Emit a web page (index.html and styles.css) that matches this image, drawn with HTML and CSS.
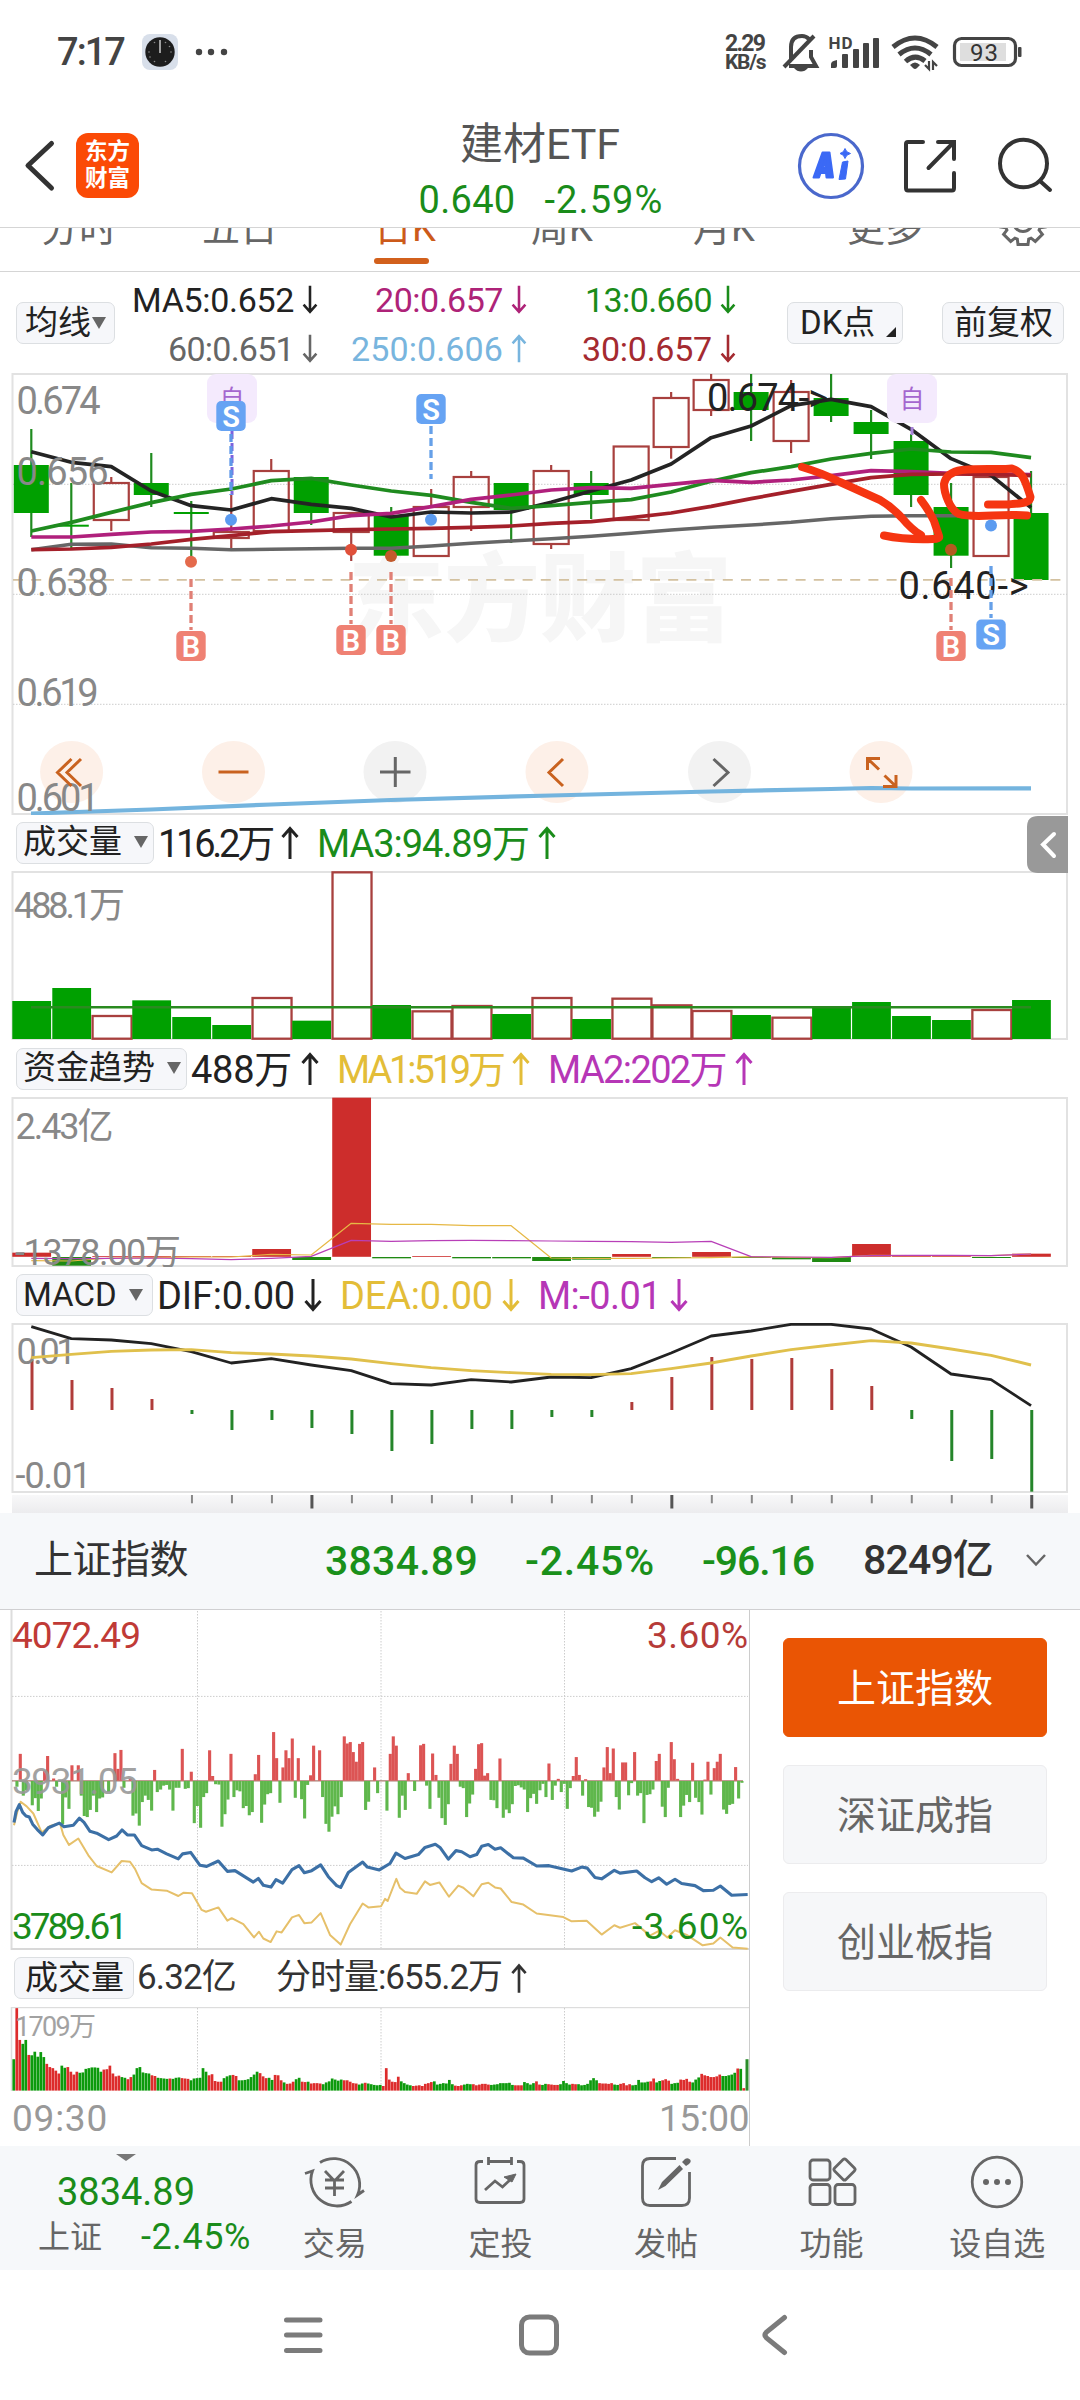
FILE: index.html
```html
<!DOCTYPE html>
<html lang="zh-CN">
<head>
<meta charset="utf-8">
<title>建材ETF</title>
<link rel="stylesheet" href="styles.css">
</head>
<body>
<svg width="0" height="0" class="defs">
  <symbol id="up" viewBox="0 0 18 34"><path d="M9 33V3M1.500 11L9 2.500L16.500 11" fill="none" stroke="currentColor" stroke-width="3"/></symbol>
  <symbol id="down" viewBox="0 0 18 34"><path d="M9 1V31M1.500 23L9 31.500L16.500 23" fill="none" stroke="currentColor" stroke-width="3"/></symbol>
</svg>
<div class="phone">
  <div class="status">
    <span class="clock-text" data-w="67">7:17</span>
    <svg class="st-left" width="90" height="40" viewBox="140 32 90 40">
      <rect x="142" y="34" width="36" height="36" rx="8" fill="#d8dfea"/>
      <circle cx="160" cy="52" r="14.700" fill="#1d1d1d"/>
      <path d="M160 40V53" stroke="#ccc" stroke-width="1.500"/>
      <g fill="#888"><circle cx="165.500" cy="42.500" r=".8"/><circle cx="169.500" cy="46.500" r=".8"/><circle cx="171" cy="52" r=".8"/><circle cx="165.500" cy="61.500" r=".8"/><circle cx="154.500" cy="61.500" r=".8"/><circle cx="150" cy="57" r=".8"/><circle cx="149" cy="52" r=".8"/><circle cx="154.500" cy="42.500" r=".8"/></g>
      <g fill="#444"><circle cx="199" cy="52" r="3.200"/><circle cx="211" cy="52" r="3.200"/><circle cx="224" cy="52" r="3.200"/></g>
    </svg>
    <div class="speed"><span data-w="47">2.29</span><span data-w="49">KB/s</span></div>
    <svg class="st-right" width="250" height="44" viewBox="780 30 250 44">
      <g fill="none" stroke="#444" stroke-width="4">
        <path d="M790 66H817L812 57V50M792 59V47Q792 36 803 36Q807 36 810 39"/>
        <path d="M785 67L815 36"/>
      </g>
      <path d="M795 68H809Q806 71.500 802 71.500Q798 71.500 795 68Z" fill="#444"/>
      <text x="829.500" y="48.500" font-size="17" font-weight="700" textLength="24" fill="#444">HD</text>
      <g fill="#444">
        <path d="M832 68V64Q832 61 838 60V66Q838 68 836 68Z"/><rect x="843" y="54" width="6" height="14" rx="1"/><rect x="854" y="49" width="6" height="19" rx="1"/><rect x="864" y="43" width="6" height="25" rx="1"/><rect x="874" y="38" width="6" height="30" rx="1"/>
      </g>
      <g fill="none" stroke="#444" stroke-width="5">
        <path d="M894 47Q916 29 938 47"/><path d="M900 54.500Q916 41.500 932 54.500"/><path d="M906.500 61.500Q916 53 926 61"/>
      </g>
      <path d="M911 65Q916 60 921 65L918 68Q916 70 914 68Z" fill="#444"/>
      <path d="M930 61V69L926 65M934 70V62L938 66" fill="none" stroke="#444" stroke-width="2.200"/>
      <rect x="955.500" y="38.500" width="61" height="27" rx="7" fill="none" stroke="#444" stroke-width="3.200"/>
      <rect x="961" y="43" width="46" height="18" fill="#dedede"/>
      <rect x="1019" y="47" width="3.500" height="10" rx="1" fill="#444"/>
      <text x="971" y="61" font-size="24" textLength="28" fill="#333">93</text>
    </svg>
  </div>

  <header class="header">
    <div class="head-left">
      <svg width="32" height="54" viewBox="24 139 32 54"><path d="M51.500 143.500L28 165.500L51.500 188" fill="none" stroke="#333" stroke-width="5" stroke-linecap="round" stroke-linejoin="round"/></svg>
      <div class="logo"><span>东方</span><span>财富</span></div>
    </div>
    <div class="head-mid">
      <div class="name" data-w="160">建材ETF</div>
      <div class="quote"><span data-w="97">0.640</span><span data-w="119">-2.59%</span></div>
    </div>
    <svg class="head-icons" width="260" height="72" viewBox="795 130 260 72">
      <circle cx="831" cy="166" r="31.500" fill="none" stroke="#4a68cc" stroke-width="3.200"/>
      <path d="M813.500 177.500L822.500 152.500H829.500L833 177.500H826.500L826 173H820.500L819 177.500ZM822.500 167.500H825.500L825 160Z" fill="#3b69f5" stroke="#3b69f5" stroke-width="2" stroke-linejoin="round"/>
      <path d="M842.500 162L848 161L845.500 179L839 179.500ZM845 148.500Q846 152.500 850.500 153.500Q846 154.500 845 158.500Q844 154.500 840 153.500Q844 152.500 845 148.500Z" fill="#3b69f5" stroke="#3b69f5" stroke-linejoin="round"/>
      <g fill="none" stroke="#333" stroke-width="4" stroke-linecap="round">
        <path d="M923 142H908Q906 142 906 144V188Q906 190.500 908 190.500H952Q954 190.500 954 188V173M938 142H954V159M953 143L928.500 168"/>
        <ellipse cx="1023.500" cy="163.500" rx="23.500" ry="23.800"/><path d="M1040 181L1050 190"/>
      </g>
    </svg>
  </header>

  <nav class="tabs">
    <span class="t1">分时</span><span class="t2">五日</span><span class="t3 on">日K</span><span class="t4">周K</span><span class="t5">月K</span><span class="t6">更多</span>
    <svg class="gear" width="54" height="54" viewBox="-27 -27 54 54"><path id="gearpath" fill="none" stroke="#666" stroke-width="3"/><circle r="9.500" fill="none" stroke="#666" stroke-width="3"/></svg>
  </nav>

  <section class="ma">
    <button class="chip">均线<i class="tri"></i></button>
    <div class="ma-grid">
      <span class="k"><b data-w="162">MA5:0.652</b><svg><use href="#down"/></svg></span>
      <span class="m"><b data-w="128">20:0.657</b><svg><use href="#down"/></svg></span>
      <span class="g"><b data-w="127">13:0.660</b><svg><use href="#down"/></svg></span>
      <span class="y"><b data-w="126">60:0.651</b><svg><use href="#down"/></svg></span>
      <span class="b"><b data-w="152">250:0.606</b><svg><use href="#up"/></svg></span>
      <span class="r"><b data-w="130">30:0.657</b><svg><use href="#down"/></svg></span>
    </div>
    <button class="chip dk">DK点<i class="corner"></i></button>
    <button class="chip fq">前复权</button>
  </section>

  <svg id="kline" class="chart" width="1080" height="442" viewBox="0 373 1080 442"></svg>
  <div class="row h56">
    <button class="chip w138">成交量<i class="tri"></i></button>
    <span class="val k"><b data-w="114">116.2万</b><svg><use href="#up"/></svg></span>
    <span class="val g"><b data-w="212">MA3:94.89万</b><svg><use href="#up"/></svg></span>
    <svg class="drawer" width="41" height="57" viewBox="0 0 41 57"><path d="M41 0H11Q0 0 0 11V46Q0 57 11 57H41Z" fill="#999"/><path d="M27 18L16 28.500L27 40" fill="none" stroke="#fff" stroke-width="4" stroke-linecap="round"/></svg>
  </div>
  <svg id="vol" class="chart" width="1080" height="169" viewBox="0 871 1080 169"></svg>
  <div class="row h57">
    <button class="chip w171">资金趋势<i class="tri"></i></button>
    <span class="val k"><b data-w="101">488万</b><svg><use href="#up"/></svg></span>
    <span class="val o"><b data-w="166">MA1:519万</b><svg><use href="#up"/></svg></span>
    <span class="val p"><b data-w="178">MA2:202万</b><svg><use href="#up"/></svg></span>
  </div>
  <svg id="fund" class="chart" width="1080" height="170" viewBox="0 1097 1080 170"></svg>
  <div class="row h56">
    <button class="chip w137">MACD<i class="tri"></i></button>
    <span class="val k"><b data-w="138">DIF:0.00</b><svg><use href="#down"/></svg></span>
    <span class="val o"><b data-w="153">DEA:0.00</b><svg><use href="#down"/></svg></span>
    <span class="val p"><b data-w="123">M:-0.01</b><svg><use href="#down"/></svg></span>
  </div>
  <svg id="macd" class="chart" width="1080" height="190" viewBox="0 1323 1080 190"></svg>

  <div class="index">
    <span class="i1" data-w="154">上证指数</span>
    <span class="i2 up" data-w="153">3834.89</span>
    <span class="i3 up" data-w="130">-2.45%</span>
    <span class="i4 up" data-w="112">-96.16</span>
    <span class="i5" data-w="130">8249亿</span>
    <svg width="24" height="16" viewBox="0 0 24 16"><path d="M3 3L12 12.500L21 3" fill="none" stroke="#666" stroke-width="2.500"/></svg>
  </div>

  <div class="lower">
    <div class="minute">
      <svg id="min" class="chart" width="749" height="340" viewBox="0 1609 749 340"></svg>
      <div class="row minrow">
        <button class="chip w120">成交量</button>
        <span class="val d"><b data-w="99">6.32亿</b></span>
        <span class="val d fs"><b data-w="226">分时量:655.2万</b><svg><use href="#up"/></svg></span>
      </div>
      <svg id="minvol" class="chart" width="749" height="85" viewBox="0 2005 749 85"></svg>
      <div class="times"><span data-w="96">09:30</span><span data-w="90">15:00</span></div>
    </div>
    <div class="picks">
      <button class="pick sel">上证指数</button>
      <button class="pick">深证成指</button>
      <button class="pick">创业板指</button>
    </div>
  </div>

  <footer class="foot">
    <div class="foot-index">
      <i class="foot-tri"></i>
      <div class="big" data-w="138">3834.89</div>
      <div class="pair"><span>上证</span><em data-w="110">-2.45%</em></div>
    </div>
    <div class="act"><svg width="64" height="60" viewBox="303 2152 64 60" fill="none" stroke="#666" stroke-width="2.800"><path d="M320 2162.500A26 26 0 0 1 357.500 2195L364 2190.500M351.500 2201.500A26 26 0 0 1 312.500 2171L305 2173.500"/><path d="M325 2171L334.500 2181L344 2171M325 2180H344M325 2188H344M334.500 2181V2196"/></svg><span>交易</span></div>
    <div class="act"><svg width="64" height="60" viewBox="468 2152 64 60" fill="none" stroke="#666" stroke-width="2.800"><path d="M483 2161.500H480Q476 2161.500 476 2165V2199Q476 2202.500 480 2202.500H520Q524 2202.500 524 2199V2165Q524 2161.500 520 2161.500H517M488.500 2161.500H511.500M488.500 2157V2165M511.500 2157V2165M485 2190L495 2181L502.500 2187L511 2179"/><path d="M504 2177L516 2174L512 2182Z" fill="#666" stroke-width="1"/></svg><span>定投</span></div>
    <div class="act"><svg width="64" height="60" viewBox="633 2152 64 60" fill="none" stroke="#666" stroke-width="2.800"><path d="M675 2158.500H649Q641.500 2158.500 641.500 2166V2198Q641.500 2205.500 649 2205.500H681Q688.500 2205.500 688.500 2198V2172"/><path d="M657 2190L661 2182L678.500 2165L682 2169L664.500 2186ZM681 2162L684 2159Q687 2157 689.500 2160Q690.500 2162 688 2164L685 2166Z" fill="#666" stroke="none"/></svg><span>发帖</span></div>
    <div class="act"><svg width="64" height="60" viewBox="799 2152 64 60" fill="none" stroke="#666" stroke-width="2.800"><rect x="809" y="2160" width="20" height="20" rx="3"/><rect x="809" y="2184.500" width="20" height="20" rx="3"/><rect x="834" y="2184.500" width="20" height="20" rx="3"/><rect x="835.500" y="2161.500" width="16" height="16" rx="2" transform="rotate(45 843.500 2169.500)"/></svg><span>功能</span></div>
    <div class="act"><svg width="64" height="60" viewBox="965 2152 64 60"><circle cx="997" cy="2182" r="24.800" fill="none" stroke="#666" stroke-width="2.700"/><g fill="#666"><circle cx="986" cy="2182" r="3"/><circle cx="997" cy="2182" r="3"/><circle cx="1008" cy="2182" r="3"/></g></svg><span>设自选</span></div>
  </footer>

  <div class="sysnav">
    <svg width="520" height="50" viewBox="280 2310 520 50" fill="none" stroke="#7b7b7b" stroke-width="5" stroke-linecap="round">
      <path d="M286.500 2320H320M286.500 2335H320M286.500 2350.500H320"/>
      <rect x="521.500" y="2317" width="35" height="36" rx="8"/>
      <path d="M784.500 2317.500L766.500 2332Q763.500 2335 766.500 2338L784.500 2352.500"/>
    </svg>
  </div>
</div>
<script src="script.js"></script>
</body>
</html>
```
FILE: styles.css
```css
* { box-sizing: border-box; }
body { margin: 0; background: #fff; color: #222; font-family: Roboto, "Noto Sans CJK SC", sans-serif; }
svg { display: block; flex: none; }
.defs { position: absolute; }
.phone { width: 1080px; height: 2400px; display: flex; flex-direction: column; overflow: hidden; }
button { font: inherit; color: inherit; margin: 0; }
b { font-weight: 400; }
[data-w] { white-space: nowrap; display: inline-block; flex: none; }

.status { height: 104px; display: flex; align-items: center; padding-left: 57px; color: #444; flex: none; }
.clock-text { font-size: 38px; font-weight: 500; }
.st-left { margin-left: 16px; }
.speed { margin-left: 495px; width: 54px; display: flex; flex-direction: column; font-size: 21px; line-height: 18px; font-weight: 700; padding-top: 1px; }
.speed span:first-child { font-size: 23px; }

.header { height: 124px; border-bottom: 1px solid #d5d5d5; display: flex; align-items: flex-start; flex: none; }
.head-left { width: 400px; padding: 29px 0 0 24px; display: flex; align-items: center; gap: 20px; }
.logo { width: 63px; height: 65px; border-radius: 12px; background: #fb4a06; color: #fff; display: flex; flex-direction: column; justify-content: center; align-items: center; font-size: 22.5px; line-height: 27px; font-weight: 700; padding-bottom: 2px; }
.head-mid { width: 280px; padding-top: 15px; display: flex; flex-direction: column; align-items: center; }
.name { font-size: 43px; line-height: 50px; color: #555; }
.quote { display: flex; gap: 29px; font-size: 38px; line-height: 60px; color: #1a8c1a; margin-left: 2px; padding-top: 1px; }
.head-icons { margin: 26px 0 0 115px; }

.tabs { height: 44px; border-bottom: 1px solid #d5d5d5; overflow: hidden; display: flex; font-size: 38px; line-height: 50px; color: #666; flex: none; }
.tabs span { margin-top: -25px; height: 66px; flex: none; }
.t1 { margin-left: 41px; width: 161px; }
.t2 { width: 172px; }
.t3 { width: 157px; color: #cc5a1a; position: relative; }
.t3::after { content: ""; position: absolute; left: 0; top: 55px; width: 55px; height: 6px; border-radius: 3px; background: #d2601c; }
.t4 { width: 162px; }
.t5 { width: 154px; }
.t6 { width: 149px; }
.gear { margin-top: -33px; }

.ma { height: 101px; display: flex; align-items: flex-start; flex: none; }
.chip { height: 42px; padding: 0 0 2px 6px; border: 1px solid #dcdfe2; border-radius: 7px; background: #f6f7fa; font-size: 33px; line-height: 36px; display: flex; align-items: center; flex: none; white-space: nowrap; }
.ma .chip { margin: 30px 0 0 16px; width: 99px; padding-left: 8px; padding-bottom: 0; }
.tri { border: 7px solid transparent; border-top: 12px solid #666; border-bottom: 0; margin-left: 12px; }
.ma .tri { margin-left: 1px; }
.ma .chip.dk { width: 116px; margin-left: 51px; padding-left: 12px; position: relative; }
.corner { position: absolute; right: 6px; bottom: 6px; border-left: 10px solid transparent; border-bottom: 10px solid #222; }
.ma .chip.fq { width: 122px; margin-left: 39px; padding-left: 11px; }
.ma-grid { width: 621px; display: grid; grid-template-columns: 203px 209px 209px; grid-template-rows: 49px 49px; padding-top: 3px; }
.ma-grid span { display: flex; justify-content: flex-end; align-items: center; gap: 8px; font-size: 34px; }
.ma-grid span svg { width: 16px; height: 29px; }
.k { color: #222; } .m { color: #ae2378; } .g { color: #1a8c1a; } .y { color: #666; } .b { color: #78b5de; } .r { color: #a42a30; }
.o { color: #e3bd38; } .p { color: #b636b6; } .d { color: #333; }

.chart { flex: none; }
.row { display: flex; align-items: center; padding-left: 16px; flex: none; position: relative; }
.h56 { height: 56px; } .h57 { height: 57px; }
.w138 { width: 138px; } .w171 { width: 171px; } .w137 { width: 137px; } .w120 { width: 120px; padding-left: 10px; padding-bottom: 0; }
.w137 { padding-bottom: 0; }
.val { display: flex; align-items: center; gap: 9px; font-size: 38px; line-height: 50px; margin-left: 18px; padding-top: 2px; }
.chip + .val { margin-left: 4px; }
.val svg { width: 18px; height: 34px; margin-top: -2px; }
.drawer { position: absolute; right: 12px; top: 1px; }

.index { height: 97px; background: #f6f8fa; border-bottom: 1px solid #d0d0d2; display: flex; align-items: center; padding: 0 0 3px 34px; color: #333; flex: none; font-size: 41px; line-height: 60px; font-weight: 500; }
.i1 { font-size: 39px; font-weight: 400; }
.i2 { margin-left: 137px; padding-top: 2px; } .i3 { margin-left: 47px; padding-top: 2px; } .i4 { margin-left: 47px; padding-top: 2px; } .i5 { margin-left: 49px; margin-right: 31px; }
.up { color: #1a901a; }

.lower { height: 536px; display: flex; flex: none; }
.minute { width: 750px; border-right: 1px solid #ccc; display: flex; flex-direction: column; }
.minrow { height: 56px; padding-left: 14px; }
.minrow .val { font-size: 35px; padding-top: 0; }
.minrow .chip + .val { margin-left: 3px; }
.minrow .fs { margin-left: 40px; }
.minrow .val svg { width: 16px; height: 31px; margin-top: 0; }
.times { display: flex; justify-content: space-between; padding: 6px 0 0 12px; font-size: 37px; line-height: 44px; color: #999; }
.picks { padding: 28px 0 0 33px; display: flex; flex-direction: column; gap: 28px; }
.pick { width: 264px; height: 99px; border: 1px solid #ececee; border-radius: 6px; background: #f6f7f9; font-size: 39px; color: #666; padding: 0 0 5px; }
.pick.sel { background: #ea5504; color: #fff; border-color: #ea5504; }

.foot { height: 124px; background: #f6f8fa; display: flex; color: #666; flex: none; font-size: 32px; }
.foot-index { width: 252px; display: flex; flex-direction: column; align-items: center; }
.foot-tri { border: 10px solid transparent; border-top: 7px solid #777; border-bottom: 0; margin-top: 8px; }
.big { font-size: 38px; line-height: 44px; color: #1a8c1a; margin-top: 9px; }
.pair { display: flex; gap: 39px; line-height: 46px; margin-left: 38px; align-self: flex-start; }
.pair em { font-style: normal; font-size: 36px; color: #1a8c1a; }
.act { width: 165.600px; display: flex; flex-direction: column; align-items: center; padding-top: 6px; }
.act span { line-height: 40px; margin-top: 12px; }

.sysnav { height: 130px; padding: 40px 0 0 280px; flex: none; }
```
FILE: script.js
```js
document.querySelectorAll('[data-w]').forEach(el => {
  const natural = el.getBoundingClientRect().width;
  const w = +el.dataset.w;
  el.style.letterSpacing = (w - natural) / el.textContent.length + 'px';
});

const RED = '#a8403e', GREEN = '#00a000', LINE = '#1f8b1f';
const cx = i => 31.3 + 39.99 * i;
const rect = (x, y, w, h, fill, extra = '') => `<rect x="${x}" y="${y}" width="${w}" height="${h}" fill="${fill}" ${extra}/>`;
const line = (x1, y1, x2, y2, c, w, extra = '') => `<path d="M${x1} ${y1}L${x2} ${y2}" stroke="${c}" stroke-width="${w}" fill="none" ${extra}/>`;
const poly = (pts, c, w, extra = '') => `<polyline points="${pts.map(p => p.join()).join(' ')}" fill="none" stroke="${c}" stroke-width="${w}" stroke-linejoin="round" ${extra}/>`;
const series = (ys, oy, c, w) => poly(ys.map((y, i) => [cx(i), oy + y / 3]), c, w);
const text = (x, y, s, size, len, c, extra = '') => `<text x="${x}" y="${y}" font-size="${size}" textLength="${len}" fill="${c}" ${extra}>${s}</text>`;
const frame = (y1, y2) => `<rect x="12.5" y="${y1}" width="1054.500" height="${y2 - y1}" fill="none" stroke="#e2e2e2" stroke-width="2"/>`;
const put = (id, s) => { document.getElementById(id).innerHTML = s; };

// gear outline
let gp = '';
for (let i = 0; i < 8; i++) {
  const a = i * Math.PI / 4 + Math.PI / 2;
  [[18, -.32], [23, -.22], [23, .22], [18, .32]].forEach(([r, d]) => {
    gp += (gp ? 'L' : 'M') + (r * Math.cos(a + d)).toFixed(1) + ' ' + (r * Math.sin(a + d)).toFixed(1);
  });
}
document.getElementById('gearpath').setAttribute('d', gp + 'Z');

// daily candles: [up?, body top, body bottom, wick top, wick bottom]
const candles = [
  [0,465,513,429,537],[0,524.7,526.7,483,548],[1,483,520,477,531],[0,483,495,453,507],[0,512,514,501,567],
  [1,532,538,495,548],[1,471,531,459,531],[0,477,513,477,525],[1,513,532,513,561],[0,516,555.700,507,561],
  [1,507,556,489,556],[1,477,507,471,531],[0,483,510,483,543],[1,471,544,465,549],[0,483,495,471,519],
  [1,446.500,520,446.500,520],[1,398,447,392,458.700],[1,380,410,374,416],[0,392,410,374,441],[1,392,441,380,453],
  [0,398,416,374,422],[0,422,434,410,459],[0,441,495,434,507],[0,507,555.700,483,568],[1,477,556,465,556],[0,513,580,471,580]];
let s = '';
s += `<text x="348" y="633" font-size="96" font-weight="900" textLength="384" fill="#f6f6f6">东方财富</text>`;
s += frame(374, 814);
[484.3, 594.3, 704.3].forEach(y => s += line(13, y, 1067, y, '#ccc', 1, 'stroke-dasharray="1.500 1.500"'));
candles.forEach(([up, t, b, wt, wb], i) => {
  const x = cx(i);
  if (up) {
    s += line(x, wt, x, t, RED, 2.200) + line(x, b, x, wb, RED, 2.200);
    s += rect(x - 17.5, t, 35, b - t, 'none', `stroke="${RED}" stroke-width="2.200"`);
  } else {
    s += line(x, wt, x, wb, LINE, 2.200) + rect(x - 17.5, t, 35, b - t, GREEN);
  }
});
s += line(13, 579.800, 1067, 579.800, '#d3c1a0', 1.800, 'stroke-dasharray="10 8.200"');
[[71.6, 1], [233.500, 1], [395, 0], [557, 1], [719.500, 0], [881, 1]].forEach(([x, o]) =>
  s += `<ellipse cx="${x}" cy="772" rx="31.500" ry="31" fill="${o ? '#fdf0e8' : '#f2f2f2'}"/>`);
s += series([554,538,537,548,550,554,553,551,550,550,543,535,528,521,514,505,495,487,480,472,461,454,452,452,451,450], 365, '#666', 3.500);
s += series([260,292,305,378,422,435,401,418,430,456,441,444,441,412,378,345,297,218,183,122,103,125,193,281,331,428], 365, '#242424', 3.700);
s += series([498,472,442,413,388,372,347,340,360,378,391,412,430,422,412,404,381,349,323,305,282,265,252,261,262,278], 365, LINE, 3.700);
s += series([516,516,508,501,499,492,483,471,452,445,425,403,390,375,368,370,358,346,352,345,332,317,320,325,327,329], 365, '#b0207c', 3.700);
s += series([554,552,547,537,523,512,500,497,494,492,490,487,483,475,470,458,444,424,401,379,358,338,328,327,328,332], 365, '#a4202a', 3.700);
s += poly([[31,813.5],[151,809.500],[271,804.500],[391,800],[551,795.500],[711,791.500],[831,789],[871,788],[911,788.500],[1031,788.300]], '#74b4de', 4.200);
const axis = [[16.5,413.5,'0.674',84],[16.5,484.5,'0.656',92],[16.5,595.5,'0.638',92],[16.5,705.5,'0.619',82],[16.5,811,'0.601',83]];
axis.forEach(([x, y, t, l]) => s += text(x, y, t, 38, l, '#888'));
s += '<g fill="none" stroke="#c9621f" stroke-width="3"><path d="M71.500 759L57.500 772.500L71.500 786M81 759L67 772.500L81 786M218.500 772H248.500M563 759L549 772.500L563 786M867.500 770V758.500H880M868.500 759.500L879 769.500M896 775V786.500H883M884.500 775.500L895 785.500"/></g>';
s += '<g fill="none" stroke="#666" stroke-width="3"><path d="M380 772H410.500M395.300 757V787M713.500 759L728 772.500L713.500 786"/></g>';
s += text(707, 411, '0.674-&gt;', 38, 121, '#222') + text(898.500, 599, '0.640-&gt;', 38, 130, '#222');
const marker = (x, y, l) => rect(x - 14.700, y, 29.400, 30, l === 'S' ? '#66a3f3' : '#ef8173', 'rx="5"') +
  `<text x="${x}" y="${y + 25.500}" font-size="29" font-weight="600" text-anchor="middle" fill="#fff">${l}</text>`;
const zi = x => rect(x, 374, 50, 49, '#f4eafd', 'rx="9"') + `<text x="${x + 25}" y="408" font-size="25" text-anchor="middle" fill="#a566cf">自</text>`;
s += zi(207) + zi(887);
s += line(232, 431, 232, 495, '#7d62dd', 3, 'stroke-dasharray="8 4"') + line(912, 427, 912, 435, '#a783d8', 3);
[[231,434,495,'#5f98e8'],[431,426,479,'#66a0e8'],[191,579,630,'#e08076'],[351,572,624,'#e08076'],[391,572,624,'#e08076'],[951,578,630,'#e08076'],[991,566,618,'#66a0e8']]
  .forEach(([x, a, b, c]) => s += line(x, a, x, b, c, 3.300, 'stroke-dasharray="8 4"'));
[[231,401,'S'],[431,394,'S'],[191,631,'B'],[351,625,'B'],[391,625,'B'],[951,631,'B'],[991,619.5,'S']].forEach(m => s += marker(...m));
[[231,519.7,'#5b9bf0'],[431,519.7,'#5b9bf0'],[991,525.5,'#5b9bf0'],[191,561.7,'#e46a4c'],[351,549.7,'#e0503a'],[391,556,'#c25a2c'],[951,549.7,'#b35a20']]
  .forEach(([x, y, c]) => s += `<circle cx="${x}" cy="${y}" r="6" fill="${c}"/>`);
s += `<g fill="none" stroke="#f53511" stroke-width="8" stroke-linecap="round" stroke-linejoin="round">
<path d="M802 467Q822 473 840 482L880 500Q892 507 902 518Q912 530 921 535"/>
<path d="M921 500Q930 512 934 521L939 536Q940 539 933 539Q905 540 884 535.500"/>
<path d="M1027 515.500C1000 513 975 519 959 514C950 510 944 493 944 484C946 474 955 471 962 470C985 468 1000 470 1012 468.500C1024 472 1026 484 1030.500 497C1030 504 1020 503 1008 504.500L988 504.500"/></g>`;
put('kline', s);

// volume bars: negative value = hollow (rising) bar
const vol = [573,534,-618,571,621,645,-564,632,-187,585,-604,-588,612,-564,627,-566,-586,-603,615,-623,588,576,618,630,-600,570];
s = frame(872, 1039);
vol.forEach((v, i) => {
  const x = cx(i), y = 810 + Math.abs(v) / 3;
  s += v > 0 ? rect(x - 19, y, 38.800, 1039 - y, GREEN) : rect(x - 18.700, y, 39, 1038.700 - y, 'none', `stroke="${RED}" stroke-width="2.300"`);
});
s += line(31, 1007.300, 1031, 1007.300, '#2a8a20', 2.400);
s += text(14, 917.500, '488.1万', 36, 111, '#888');
put('vol', s);

const fund = [[1,1328],[0,1367],[1,1338],[1,1338],[1,1338],[1,1338],[1,1317],[0,1350],[1,863],[0,1345],[1,1338],[0,1345],[0,1345],[0,1353],[0,1349],[1,1332],[0,1344],[1,1326],[0,1344],[0,1348],[0,1356],[1,1302],[1,1338],[1,1338],[0,1344],[1,1331]];
s = frame(1098, 1266);
fund.forEach(([up, v], i) => {
  const y = 810 + v / 3, x = cx(i) - 19;
  s += up ? rect(x, y, 38.800, 1256.800 - y, '#cd2d2c') : rect(x, 1257, 38.800, y - 1257, '#1f8a12');
});
s += series([1352,1353,1344,1343,1341,1341,1333,1335,1240,1243,1243,1247,1247,1344,1345,1345,1344,1343,1340,1342,1343,1336,1337,1337,1337,1332], 810, '#e6b845', 1.200);
s += series([1345,1346,1345,1344,1346,1349,1345,1339,1291,1294,1292,1291,1292,1293,1294,1295,1297,1294,1340,1341,1342,1337,1336,1336,1337,1332], 810, '#b83fb8', 1.200);
s += text(15.500, 1138.500, '2.43亿', 36, 98, '#888') + text(15, 1265, '-1378.00万', 36, 166, '#888');
put('fund', s);

const hist = [300,360,384,417,462,510,480,504,522,573,552,507,507,471,471,426,351,291,297,294,327,378,477,603,597,695];
s = '<defs><linearGradient id="sh" x1="0" y1="0" x2="0" y2="1"><stop offset="0" stop-color="#f8f8f9"/><stop offset="1" stop-color="#ececee"/></linearGradient></defs>';
s += rect(12, 1495, 1056, 18, 'url(#sh)') + frame(1324, 1492);
hist.forEach((v, i) => {
  s += line(cx(i) + .7, 1410, cx(i) + .7, 1260 + v / 3, v < 450 ? '#b03c3a' : '#25852a', 3);
  if (i > 3) { const big = i % 9 === 7; s += line(cx(i) + .7, 1495, cx(i) + .7, big ? 1508.500 : 1503.300, big ? '#555' : '#888', big ? 3 : 2); }
});
s += text(16.500, 1364, '0.01', 36, 60, '#888') + text(15.500, 1488, '-0.01', 36, 76, '#888');
s += series([200,236,240,251,275,309,296,315,332,371,375,359,366,351,353,326,279,228,213,193,193,207,261,342,359,437], 1260, '#222', 2.800);
s += series([293,283,274,270,269,278,282,288,297,311,323,332,338,343,344,341,326,309,288,269,255,242,249,267,286,315], 1260, '#e0c04c', 2.900);
put('macd', s);

// minute chart, source units: x in thirds of a pixel, y in 1/2.8 px
const Y = y => 1600 + y / 2.8;
const right = a => a.map(([x, y]) => [x + 1140, y]);
const reds = [[61,428],[134,475],[143,434],[161,497],[216,460],[235,460],[345,426],[354,470],[363,417],[391,497],[464,473],[547,414],[574,478],[629,418],[638,490],[693,428],[766,485],[776,431],[821,367],[830,440],[849,466],[858,418],[867,440],[877,385],[895,440],[932,488],[941,405],[959,418],[1033,379],[1042,399],[1051,395],[1060,423],[1069,450],[1079,400],[1088,395],[1124,466]]
  .concat(right([[31,428],[40,379],[49,405],[85,482],[122,404],[131,400],[158,427],[168,487],[213,456],[223,405],[232,428],[287,470],[296,401],[305,398],[314,489],[323,482],[360,441],[507,455],[535,498],[580,490],[589,437],[598,487],[617,499],[672,466],[682,409],[691,482],[700,413],[728,452],[737,452],[764,423],[829,448],[838,428],[874,395],[883,443],[893,498],[938,453],[975,500],[984,450],[1003,468],[1012,450],[1021,428],[1067,465]]));
const greens = [[51,520],[70,545],[79,530],[97,572],[106,552],[115,588],[124,553],[170,520],[188,625],[197,550],[207,582],[244,545],[253,602],[262,605],[271,585],[280,545],[290,591],[299,553],[308,550],[326,535],[372,523],[399,601],[408,595],[418,629],[427,563],[436,545],[445,557],[455,587],[472,535],[482,528],[491,517],[500,515],[509,528],[519,587],[528,523],[537,523],[556,526],[565,524],[583,622],[592,574],[602,635],[611,549],[620,538],[647,513],[657,514],[666,632],[675,597],[684,556],[702,549],[711,530],[720,533],[730,580],[739,574],[748,600],[757,591],[785,621],[794,570],[803,541],[812,538],[840,565],[886,551],[905,555],[914,609],[923,515],[968,549],[978,624],[987,646],[996,604],[1005,575],[1014,597],[1024,549],[1097,585],[1106,562],[1133,538]]
  .concat(right([[21,587],[58,607],[67,545],[76,585],[104,532],[140,517],[150,582],[177,551],[186,608],[196,627],[205,569],[241,520],[250,524],[260,605],[269,567],[278,542],[333,557],[342,558],[351,580],[370,607],[379,584],[388,594],[397,569],[406,518],[415,516],[424,522],[433,528],[443,591],[452,552],[461,540],[470,568],[480,530],[489,512],[498,549],[517,557],[526,517],[544,535],[553,512],[562,582],[571,524],[608,545],[626,577],[635,579],[644,604],[654,590],[663,562],[709,549],[718,584],[746,544],[755,510],[773,545],[782,538],[792,622],[801,543],[810,541],[819,528],[847,576],[856,605],[865,523],[902,605],[911,573],[920,543],[929,563],[947,551],[957,563],[966,598],[993,542],[1031,584],[1040,596],[1049,571],[1058,568],[1076,553],[1086,509]]));
const blue = [[42,620],[48,590],[58,570],[68,592],[78,602],[88,605],[98,625],[112,640],[128,655],[145,635],[178,622],[192,632],[220,628],[238,608],[252,620],[270,645],[290,650],[326,668],[350,658],[366,641],[382,655],[403,655],[425,685],[455,697],[472,695],[500,708],[535,722],[548,708],[572,704],[600,740],[620,743],[655,728],[682,757],[705,755],[760,787],[775,777],[790,796],[813,801],[828,780],[848,790],[876,752],[897,741],[913,761],[935,755],[962,739],[985,772],[1010,797],[1022,802],[1045,760],[1088,731],[1102,745],[1138,753],[1170,735]]
  .concat(right([[48,706],[75,721],[115,710],[135,690],[166,681],[180,690],[205,723],[228,699],[245,702],[270,716],[290,710],[305,687],[325,682],[345,695],[362,691],[400,719],[430,720],[470,742],[507,741],[530,746],[575,756],[605,745],[622,748],[645,774],[665,778],[703,754],[720,762],[770,756],[795,775],[815,786],[836,775],[860,793],[885,779],[905,791],[945,797],[970,811],[1000,810],[1021,798],[1055,824],[1103,822]]));
const gold = [[42,628],[52,590],[62,562],[80,575],[100,595],[125,648],[150,630],[180,622],[190,655],[207,683],[235,665],[265,712],[290,742],[335,760],[365,728],[390,730],[405,750],[425,790],[455,808],[500,811],[535,826],[550,817],[576,818],[605,865],[618,870],[655,858],[682,895],[695,888],[730,905],[762,942],[777,926],[790,945],[812,955],[830,925],[845,928],[876,886],[897,879],[913,902],[935,900],[962,874],[990,935],[1022,962],[1050,905],[1088,847],[1105,858],[1143,855],[1155,834],[1163,840]]
  .concat(right([[49,778],[60,803],[75,815],[110,820],[135,785],[150,795],[178,788],[207,828],[235,797],[250,803],[280,827],[305,793],[325,789],[345,802],[362,805],[395,843],[430,850],[470,875],[550,885],[575,897],[620,895],[665,934],[703,908],[720,915],[765,902],[810,937],[838,923],[862,942],[885,922],[920,935],[968,964],[1000,959],[1021,942],[1058,970],[1103,974]]));
const dots = 'stroke-dasharray="1.500 1.500"';
s = line(11.500, 1609, 11.500, 1949, '#ddd', 2) + line(11, 1948, 749, 1948, '#d8d8d8', 2);
[197.5, 381, 564.500].forEach(x => s += line(x, 1610, x, 1947, '#ccc', 1, dots));
[1695.4, 1864.400].forEach(y => s += line(12, y, 748, y, '#ccc', 1, dots));
s += line(12, 1779.900, 743, 1779.900, '#94584a', 1);
reds.forEach(([x, y]) => s += rect(x / 3 - 1.600, Y(y), 3.100, Y(503) - Y(y), '#dc5454'));
greens.forEach(([x, y]) => s += rect(x / 3 - 1.600, Y(504), 3.100, Y(y) - Y(504), '#5fb74c'));
s += poly(gold.map(([x, y]) => [x / 3, Y(y)]), '#e6c06a', 2);
s += poly(blue.map(([x, y]) => [x / 3, Y(y)]), '#3c70a6', 3.100);
s += text(12, 1647, '4072.49', 37, 129, '#c03a36') + text(12, 1793, '3931.05', 37, 126, '#999', 'opacity=".9"') + text(12, 1938, '3789.61', 37, 116, '#1a8c1a');
s += text(647, 1647, '3.60%', 37, 101, '#b63b38') + text(632, 1938, '-3.60%', 37, 116, '#1a8c1a');
put('min', s);

// minute volume, runs of colour + bar tops
const runs = 'g1283 r1140,1229 g1240,1229 r1271 g1272,1262,1276,1263,1277 r1296,1305,1308,1315,1323 g1301,1307 r1305,1318,1326,1318 g1321,1320,1310,1308,1306,1306,1307,1318 r1312,1311,1301,1323,1331,1329 g1333,1335 r1339,1333 g1326,1308,1305,1320,1322,1323 r1328,1330 g1335,1336,1337,1338 r1337 g1338,1335,1334 r1336,1337,1338 g1342,1337,1336,1335,1308,1318 r1328,1325,1344,1346,1346 g1336,1331,1328 r1327,1330 g1342,1342,1341,1339,1333,1326,1318 r1322,1331,1336 g1335,1341 r1327,1328,1342 g1348 r1352,1351,1346 g1339,1335 r1346,1347 g1346 r1351,1350,1350,1351 g1353,1348,1345,1337,1340,1343,1340 r1342,1342,1346,1350,1351 g1354,1351 r1349 g1351,1353,1355,1356,1355 r1358,1308,1340,1346,1347,1332 g1345,1350,1354,1356 r1358,1357,1356,1358,1352,1350,1347 g1345,1354,1352,1350,1351,1341,1353 r1357,1358,1356 g1354,1352,1353 r1353,1356,1354,1352,1352,1354 g1355,1354,1353,1350,1350,1350,1349,1355 r1356,1356,1356 g1347,1350,1354,1350 r1345,1354 g1355,1352 r1353,1354,1355,1355 g1353,1344,1350,1354 r1352,1353 g1353,1356,1355,1352,1342,1336,1342 r1350,1351,1351,1352,1350 g1354,1355 r1352,1350,1356,1353 g1356,1355,1341,1348,1348,1346 r1345,1337 g1348,1344 r1342,1339,1343 g1352,1350,1349 r1340,1341,1338,1346 g1348,1340,1334 r1324,1328,1330,1333,1333,1331,1326 g1330,1330,1328,1326,1321 r1309 g1310 r1364'.split(' ');
s = rect(11, 2006, 738, 1.200, '#ddd') + line(11.500, 2006, 11.500, 2090, '#ddd', 1.500);
[197.5, 381, 564.500].forEach(x => s += line(x, 2007, x, 2089, '#ccc', 1, dots));
const tops = runs.flatMap(r => r.slice(1).split(',').map(v => [r[0], +v]));
const barStep = 730 / (tops.length - 1);
tops.forEach(([c, v], k) => s += rect(12.6 + k * barStep - .2, Y(v), barStep * .9, 2089.600 - Y(v), c === 'r' ? '#dd2c2c' : '#0c9a0c'));
s += rect(745.5, Y(1283), 3, 2089.600 - Y(1283), '#2a8c2a');
s += text(15, 2034.500, '1709万', 27, 81, '#999', 'opacity=".9"');
put('minvol', s);
```
